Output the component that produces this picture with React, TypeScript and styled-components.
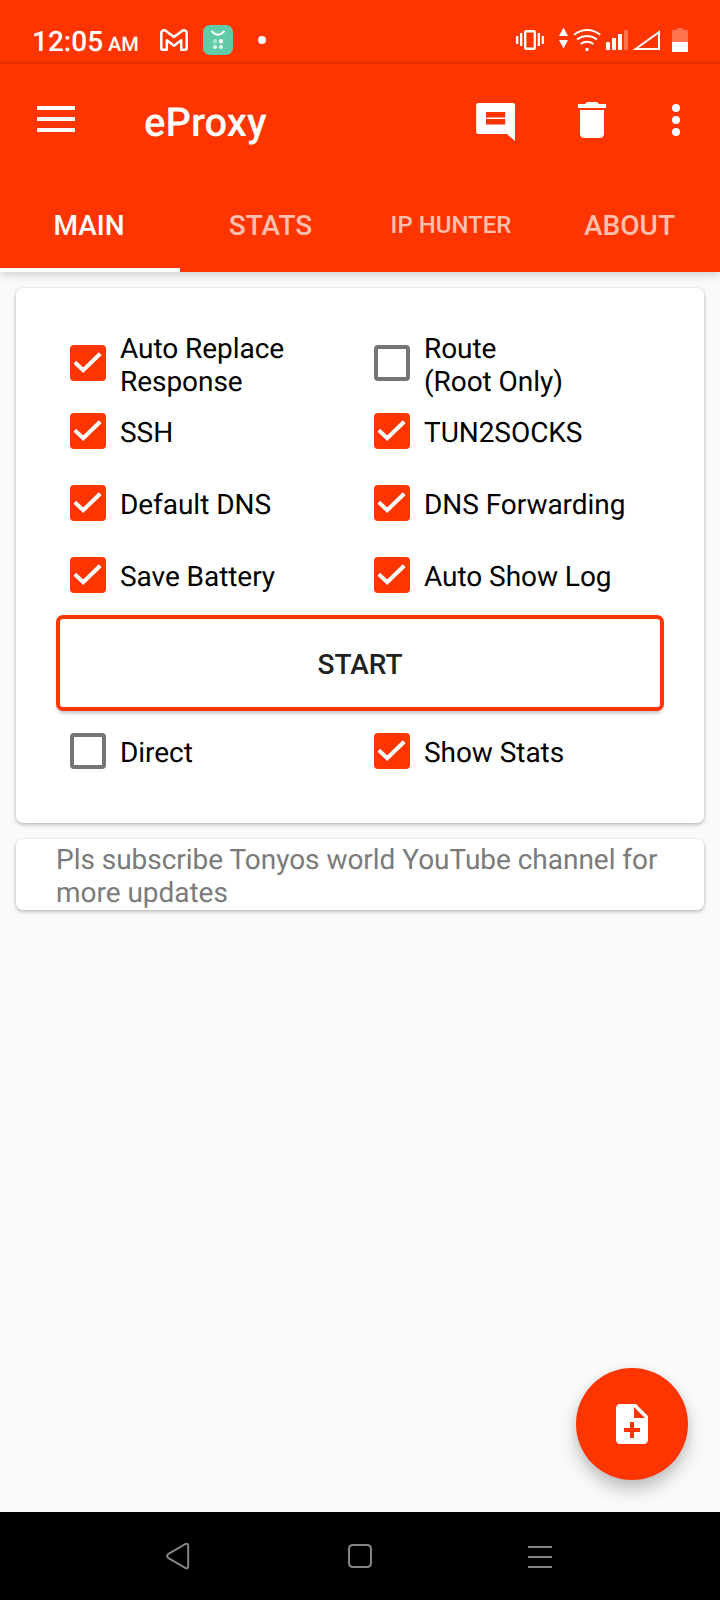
import React from "react";
import styled, { createGlobalStyle } from "styled-components";

const RED = "#ff3500";

const GlobalStyle = createGlobalStyle`
  *, *::before, *::after { box-sizing: border-box; }
  body { margin: 0; background: #fafafa; font-family: Roboto, "Liberation Sans", sans-serif; text-rendering: geometricPrecision; }
  svg { display: block; flex: none; }
`;

const Screen = styled.div`
  width: 720px;
  height: 1600px;
  display: flex;
  flex-direction: column;
  background: #fafafa;
  overflow: hidden;
`;

const Header = styled.header`
  flex: none;
  background: ${RED};
  color: #fff;
  box-shadow: 0 2px 8px rgba(0, 0, 0, 0.13), 0 4px 12px rgba(0, 0, 0, 0.06);
`;

const StatusBar = styled.div`
  height: 64px;
  padding: 16px 32px 0 32px;
  display: flex;
  justify-content: space-between;
  background: linear-gradient(to bottom, transparent 60px, rgba(90, 0, 0, 0.14) 64px);
`;

const StatusGroup = styled.div`
  display: flex;
  height: 48px;
  align-items: center;
`;

const Clock = styled.div`
  width: 128px;
  font-size: 28px;
  line-height: 33px;
  font-weight: 500;
  white-space: nowrap;
  padding-top: 5px;
`;

const Meridiem = styled.span`
  font-size: 20px;
  margin-left: 5px;
`;

const Toolbar = styled.div`
  height: 112px;
  display: flex;
  align-items: center;
  padding: 0 40px 0 32px;
`;

const Title = styled.h1`
  margin: 6px auto 0 64px;
  font-size: 40px;
  line-height: 48px;
  font-weight: 500;
`;

const Actions = styled.div`
  display: flex;
  gap: 48px;
`;

const Tabs = styled.nav`
  height: 96px;
  display: grid;
  grid-template-columns: repeat(4, 1fr);
`;

const Tab = styled.button<{ $active?: boolean; $small?: boolean; $nudge: number }>`
  border: 0;
  border-bottom: 4px solid ${(p) => (p.$active ? "#fff" : "transparent")};
  background: none;
  padding: 6px 2px 0 ${(p) => 2 + p.$nudge}px;
  font-family: inherit;
  font-weight: 500;
  font-size: ${(p) => (p.$small ? 24 : 28)}px;
  color: ${(p) => (p.$active ? "#fff" : "rgba(255, 255, 255, 0.7)")};
`;

const Content = styled.main`
  flex: 1;
  display: flex;
  flex-direction: column;
  gap: 16px;
  padding: 16px;
`;

const Card = styled.section`
  background: #fff;
  border-radius: 7px;
  box-shadow: 0 2px 4px rgba(0, 0, 0, 0.23), 0 0 3px rgba(0, 0, 0, 0.09);
`;

const OptionsCard = styled(Card)`
  height: 535px;
  padding: 43px 40px 36px;
`;

const NoticeCard = styled(Card)`
  height: 71px;
  padding: 4px 40px 0;
  font-size: 28px;
  line-height: 33px;
  letter-spacing: -0.03px;
  color: #7b7b7b;
`;

const OptionRow = styled.div<{ $height: number }>`
  height: ${(p) => p.$height}px;
  display: grid;
  grid-template-columns: 1fr 1fr;
`;

const Option = styled.div`
  display: flex;
  align-items: center;
  gap: 14px;
  padding-left: 14px;
`;

const Box = styled.span<{ $checked: boolean }>`
  flex: none;
  width: 36px;
  height: 36px;
  border-radius: 4px;
  border: 4px solid ${(p) => (p.$checked ? RED : "#757575")};
  background: ${(p) => (p.$checked ? RED : "transparent")};
`;

const Label = styled.span<{ $tall: boolean }>`
  font-size: 28px;
  line-height: 33px;
  letter-spacing: -0.05px;
  color: #000;
  white-space: pre-line;
  padding-top: ${(p) => (p.$tall ? 4 : 3)}px;
  margin: ${(p) => (p.$tall ? "-3px 0" : "0")};
`;

const StartButton = styled.button`
  display: block;
  width: 100%;
  height: 96px;
  margin: 4px 0;
  padding: 3px 0 0;
  border: 4px solid ${RED};
  border-radius: 7px;
  background: #fff;
  font-family: inherit;
  font-size: 28px;
  font-weight: 500;
  color: #212121;
  box-shadow: 0 4px 4px -2px rgba(0, 0, 0, 0.26);
`;

const Fab = styled.button`
  margin: auto 16px 16px auto;
  width: 112px;
  height: 112px;
  border: 0;
  border-radius: 50%;
  padding: 0;
  display: grid;
  place-items: center;
  background: ${RED};
  box-shadow: 0 10px 18px rgba(0, 0, 0, 0.22), 0 2px 8px rgba(0, 0, 0, 0.07);
`;

const NavBar = styled.footer`
  flex: none;
  height: 88px;
  background: #000;
  display: grid;
  grid-template-columns: repeat(3, 180px);
  justify-content: center;
  align-items: center;
  justify-items: center;
`;

const Check = () => (
  <svg width="28" height="28" viewBox="0 0 28 28">
    <path d="M1.5 14.2 10 22.2 27 5.7" transform="translate(-0.8 -1)" fill="none" stroke="#fff" strokeWidth="4" />
  </svg>
);

const GmailIcon = () => (
  <svg width="28" height="22" viewBox="0 0 28 22" fill="none" stroke="#fff" strokeWidth="2.500" strokeLinejoin="round">
    <path d="M1.300 4.200C1.300 1.500 3.900.4 6 2l8 6 8-6c2.100-1.600 4.700-.5 4.700 2.200V19.300c0 .8-.6 1.400-1.400 1.400H21.200V11.300l-7.200 5.400-7.200-5.400V20.700H2.700C1.900 20.700 1.300 20.100 1.300 19.300Z" />
  </svg>
);

const AppBadge = () => (
  <svg width="30" height="30" viewBox="0 0 30 30">
    <rect width="30" height="30" rx="7" fill="#60caa9" />
    <path d="M9 6.500Q15 13 21 6.500" fill="none" stroke="#fff" strokeWidth="2" strokeLinecap="round" />
    <g fill="#fff">
      <rect x="10" y="14" width="4" height="4.500" rx="1.800" opacity=".5" />
      <rect x="16" y="14" width="4" height="4.500" rx="1.800" />
      <rect x="10" y="20" width="4" height="4" rx="1.800" opacity=".75" />
      <rect x="16" y="20" width="4" height="4" rx="1.800" opacity=".8" />
    </g>
  </svg>
);

const SystemIcons = () => (
  <svg width="172" height="48" viewBox="516 16 172 48" fill="#fff">
    <path d="M516 36h2.300v8h-2.300zM520 33h2.300v13h-2.300zM537.700 33h2.300v13h-2.300zM541.700 36h2.300v8h-2.300z" />
    <rect x="525.200" y="31.200" width="9.600" height="17.600" rx="1" fill="none" stroke="#fff" strokeWidth="2.400" />
    <path d="M563.500 27.500 568 36h-9zM563.500 48.500 559 40h9z" />
    <g fill="none" stroke="#fff" strokeWidth="2">
      <path d="M574 34.700Q587 25.300 600.300 34.700M577 39.300Q587 32.700 597 39.300M580.500 44Q587 39.500 593.500 44" />
      <path d="M635.500 49 659 32.200V49Z" />
    </g>
    <circle cx="587" cy="49.500" r="1.700" />
    <rect x="606" y="42" width="4" height="8" rx=".7" />
    <rect x="612" y="38" width="4" height="12" rx=".7" />
    <rect x="618" y="34" width="4" height="16" rx=".7" />
    <rect x="624" y="30" width="4" height="20" rx=".7" opacity=".3" />
    <path d="M672 30h5v-2h6v2h5v12h-16z" opacity=".3" />
    <path d="M672 42h16v10h-16z" />
  </svg>
);

const MenuIcon = () => (
  <svg width="48" height="48" viewBox="0 0 48 48" fill="#fff">
    <path d="M5 10h38v4H5zM5 21h38v4H5zM5 32h38v4H5z" />
  </svg>
);

const ChatIcon = () => (
  <svg width="48" height="48" viewBox="0 0 48 48">
    <path fill="#fff" fillRule="evenodd" d="M6.300 6.900H41A2 2 0 0 1 43 8.900V45L35 38H6.300A2 2 0 0 1 4.200 36V8.900A2 2 0 0 1 6.300 6.900ZM14 16v5.400H33.200v-5.400ZM14 23.100v5.400H33.200v-5.400Z" />
  </svg>
);

const TrashIcon = () => (
  <svg width="48" height="48" viewBox="0 0 24 24" fill="#fff">
    <path d="M6 19c0 1.100.9 2 2 2h8c1.100 0 2-.9 2-2V7H6v12zM19 4h-3.500l-1-1h-5l-1 1H5v2h14V4z" />
  </svg>
);

const MoreIcon = () => (
  <svg width="16" height="48" viewBox="0 0 16 48" fill="#fff">
    <circle cx="12" cy="12" r="4" />
    <circle cx="12" cy="24" r="4" />
    <circle cx="12" cy="36" r="4" />
  </svg>
);

const NoteAddIcon = () => (
  <svg width="48" height="48" viewBox="0 0 24 24" fill="#fff">
    <path d="M14 2H6c-1.100 0-1.990.9-1.990 2L4 20c0 1.100.89 2 1.990 2H18c1.100 0 2-.9 2-2V8l-6-6zm2 14h-3v3h-2v-3H8v-2h3v-3h2v3h3v2zm-3-7V3.500L18.500 9H13z" />
  </svg>
);

const NavIcon = ({ d }: { d: string }) => (
  <svg width="28" height="28" viewBox="0 0 28 28" fill="none" stroke="#848484" strokeWidth="2">
    <path d={d} />
  </svg>
);

type Item = { label: string; checked: boolean };

const options: Item[][] = [
  [{ label: "Auto Replace\nResponse", checked: true }, { label: "Route\n(Root Only)", checked: false }],
  [{ label: "SSH", checked: true }, { label: "TUN2SOCKS", checked: true }],
  [{ label: "Default DNS", checked: true }, { label: "DNS Forwarding", checked: true }],
  [{ label: "Save Battery", checked: true }, { label: "Auto Show Log", checked: true }],
];

const footerOptions: Item[] = [
  { label: "Direct", checked: false },
  { label: "Show Stats", checked: true },
];

const Options = ({ items, height = 72 }: { items: Item[]; height?: number }) => (
  <OptionRow $height={height}>
    {items.map(({ label, checked }) => (
      <Option key={label} role="checkbox" aria-checked={checked}>
        <Box $checked={checked}>{checked && <Check />}</Box>
        <Label $tall={label.includes("\n")}>{label}</Label>
      </Option>
    ))}
  </OptionRow>
);

const NotificationDot = styled.span`
  width: 8px;
  height: 8px;
  border-radius: 50%;
  background: #fff;
  margin-left: 25px;
`;

const BadgeSlot = styled.span`
  margin-left: 15px;
`;

export default function App() {
  return (
    <>
      <GlobalStyle />
      <Screen>
        <Header>
          <StatusBar>
            <StatusGroup>
              <Clock>
                12:05<Meridiem>AM</Meridiem>
              </Clock>
              <GmailIcon />
              <BadgeSlot>
                <AppBadge />
              </BadgeSlot>
              <NotificationDot />
            </StatusGroup>
            <SystemIcons />
          </StatusBar>
          <Toolbar>
            <MenuIcon />
            <Title>eProxy</Title>
            <Actions>
              <ChatIcon />
              <TrashIcon />
              <MoreIcon />
            </Actions>
          </Toolbar>
          <Tabs>
            <Tab $active $nudge={-2}>MAIN</Tab>
            <Tab $nudge={1}>STATS</Tab>
            <Tab $small $nudge={2}>IP HUNTER</Tab>
            <Tab $nudge={-1}>ABOUT</Tab>
          </Tabs>
        </Header>
        <Content>
          <OptionsCard>
            {options.map((items, i) => (
              <Options key={i} items={items} height={i === 0 ? 64 : 72} />
            ))}
            <StartButton>START</StartButton>
            <Options items={footerOptions} />
          </OptionsCard>
          <NoticeCard>Pls subscribe Tonyos world YouTube channel for more updates</NoticeCard>
          <Fab aria-label="Add">
            <NoteAddIcon />
          </Fab>
        </Content>
        <NavBar>
          <NavIcon d="M19.200 2.200Q22 .7 22.200 3.700V24.300Q22 27.300 19.200 25.800L2.500 16.100Q-.3 14 2.500 11.900Z" />
          <NavIcon d="M7 3H21Q25 3 25 7V21Q25 25 21 25H7Q3 25 3 21V7Q3 3 7 3Z" />
          <NavIcon d="M2 5H26M2 15H26M2 25H26" />
        </NavBar>
      </Screen>
    </>
  );
}
